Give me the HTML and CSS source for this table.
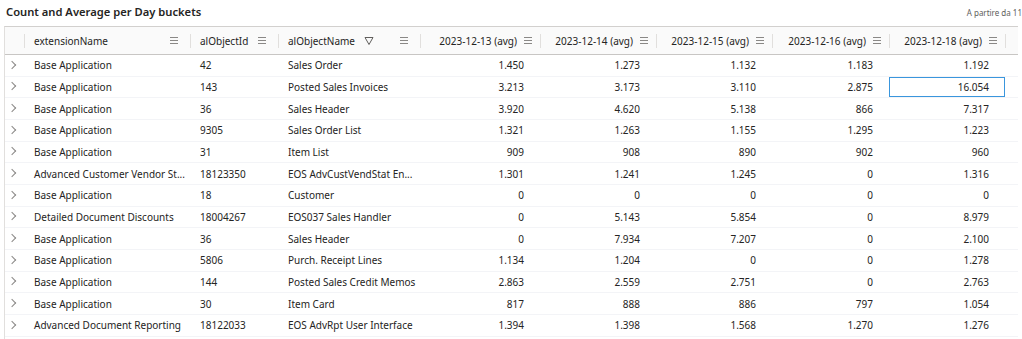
FILE: index.html
```html
<!DOCTYPE html>
<html lang="it">
<head>
    <meta charset="UTF-8">
    <title>Count and Average per Day buckets</title>
    <link rel="stylesheet" href="styles.css">
</head>
<body>
    <div class="visual">
        <div class="visual-top">
            <span class="visual-title">Count and Average per Day buckets</span>
            <span class="visual-note">A partire da 11</span>
        </div>

        <div class="matrix">
            <!-- header -->
            <div class="row head">
                <div class="cell"></div>
                <div class="cell"><span class="sep"></span><span class="label">extensionName</span><span class="menu"></span></div>
                <div class="cell"><span class="sep"></span><span class="label">alObjectId</span><span class="menu"></span></div>
                <div class="cell"><span class="sep"></span><span class="label fixed">alObjectName</span>
                    <svg class="filter" viewBox="0 0 10 10" width="10" height="10"><path d="M1 1.5h8L5 8.5z" fill="none" stroke="#605e5c" stroke-width="1"/></svg>
                    <span class="menu push"></span></div>
                <div class="cell num"><span class="sep"></span><span class="label">2023-12-13 (avg)</span><span class="menu"></span></div>
                <div class="cell num"><span class="sep"></span><span class="label">2023-12-14 (avg)</span><span class="menu"></span></div>
                <div class="cell num"><span class="sep"></span><span class="label">2023-12-15 (avg)</span><span class="menu"></span></div>
                <div class="cell num"><span class="sep"></span><span class="label">2023-12-16 (avg)</span><span class="menu"></span></div>
                <div class="cell num"><span class="sep"></span><span class="label">2023-12-18 (avg)</span><span class="menu"></span></div>
                <div class="cell"><span class="sep"></span></div>
            </div>

            <div class="row"><div class="cell exp"></div><div class="cell">Base Application</div><div class="cell">42</div><div class="cell">Sales Order</div><div class="cell num">1.450</div><div class="cell num">1.273</div><div class="cell num">1.132</div><div class="cell num">1.183</div><div class="cell num">1.192</div><div class="cell"></div></div>
            <div class="row"><div class="cell exp"></div><div class="cell">Base Application</div><div class="cell">143</div><div class="cell">Posted Sales Invoices</div><div class="cell num">3.213</div><div class="cell num">3.173</div><div class="cell num">3.110</div><div class="cell num">2.875</div><div class="cell num selected">16.054</div><div class="cell"></div></div>
            <div class="row"><div class="cell exp"></div><div class="cell">Base Application</div><div class="cell">36</div><div class="cell">Sales Header</div><div class="cell num">3.920</div><div class="cell num">4.620</div><div class="cell num">5.138</div><div class="cell num">866</div><div class="cell num">7.317</div><div class="cell"></div></div>
            <div class="row"><div class="cell exp"></div><div class="cell">Base Application</div><div class="cell">9305</div><div class="cell">Sales Order List</div><div class="cell num">1.321</div><div class="cell num">1.263</div><div class="cell num">1.155</div><div class="cell num">1.295</div><div class="cell num">1.223</div><div class="cell"></div></div>
            <div class="row"><div class="cell exp"></div><div class="cell">Base Application</div><div class="cell">31</div><div class="cell">Item List</div><div class="cell num">909</div><div class="cell num">908</div><div class="cell num">890</div><div class="cell num">902</div><div class="cell num">960</div><div class="cell"></div></div>
            <div class="row"><div class="cell exp"></div><div class="cell">Advanced Customer Vendor St...</div><div class="cell">18123350</div><div class="cell">EOS AdvCustVendStat En...</div><div class="cell num">1.301</div><div class="cell num">1.241</div><div class="cell num">1.245</div><div class="cell num">0</div><div class="cell num">1.316</div><div class="cell"></div></div>
            <div class="row"><div class="cell exp"></div><div class="cell">Base Application</div><div class="cell">18</div><div class="cell">Customer</div><div class="cell num">0</div><div class="cell num">0</div><div class="cell num">0</div><div class="cell num">0</div><div class="cell num">0</div><div class="cell"></div></div>
            <div class="row"><div class="cell exp"></div><div class="cell">Detailed Document Discounts</div><div class="cell">18004267</div><div class="cell">EOS037 Sales Handler</div><div class="cell num">0</div><div class="cell num">5.143</div><div class="cell num">5.854</div><div class="cell num">0</div><div class="cell num">8.979</div><div class="cell"></div></div>
            <div class="row"><div class="cell exp"></div><div class="cell">Base Application</div><div class="cell">36</div><div class="cell">Sales Header</div><div class="cell num">0</div><div class="cell num">7.934</div><div class="cell num">7.207</div><div class="cell num">0</div><div class="cell num">2.100</div><div class="cell"></div></div>
            <div class="row"><div class="cell exp"></div><div class="cell">Base Application</div><div class="cell">5806</div><div class="cell">Purch. Receipt Lines</div><div class="cell num">1.134</div><div class="cell num">1.204</div><div class="cell num">0</div><div class="cell num">0</div><div class="cell num">1.278</div><div class="cell"></div></div>
            <div class="row"><div class="cell exp"></div><div class="cell">Base Application</div><div class="cell">144</div><div class="cell">Posted Sales Credit Memos</div><div class="cell num">2.863</div><div class="cell num">2.559</div><div class="cell num">2.751</div><div class="cell num">0</div><div class="cell num">2.763</div><div class="cell"></div></div>
            <div class="row"><div class="cell exp"></div><div class="cell">Base Application</div><div class="cell">30</div><div class="cell">Item Card</div><div class="cell num">817</div><div class="cell num">888</div><div class="cell num">886</div><div class="cell num">797</div><div class="cell num">1.054</div><div class="cell"></div></div>
            <div class="row"><div class="cell exp"></div><div class="cell">Advanced Document Reporting</div><div class="cell">18122033</div><div class="cell">EOS AdvRpt User Interface</div><div class="cell num">1.394</div><div class="cell num">1.398</div><div class="cell num">1.568</div><div class="cell num">1.270</div><div class="cell num">1.276</div><div class="cell"></div></div>
        </div>
    </div>
</body>
</html>
```

FILE: styles.css
```css
/* --- Base --- */
* {
    margin: 0;
    padding: 0;
    box-sizing: border-box;
}

body {
    font-family: 'Noto Sans', 'Open Sans', sans-serif;
    background-color: #ffffff;
    color: #252423;
    overflow: hidden;
}

/* --- Visual header --- */
.visual {
    width: 1022px;
    height: 339px;
}

.visual-top {
    height: 26px;
    display: flex;
    justify-content: space-between;
    align-items: flex-start;
    padding: 3px 4px 0 6px;
}

.visual-title {
    font-size: 11.2px;
    font-weight: 600;
    color: #252423;
    padding-top: 1px;
}

.visual-note {
    font-size: 8px;
    color: #605e5c;
    padding-top: 4px;
    margin-right: -4px;
}

/* --- Matrix --- */
.matrix {
    margin-left: 4px;
    width: 1014px;
    border-left: 1px solid #e1dfdd;
    border-top: 1px solid #d2d0ce;
    height: 313px;
}

.row {
    display: grid;
    grid-template-columns: 19px 166px 88px 142px 120px 116px 116px 117px 116px 1fr;
    height: 21.66px;
    border-bottom: 1px solid #f3f4f7;
    font-size: 10px;
}

.row.head {
    height: 28px;
    border-bottom: 1px solid #c8c6c4;
    background-color: #fafafa;
    color: #252423;
}

.cell {
    display: flex;
    align-items: center;
    padding: 0 10px;
    white-space: nowrap;
    overflow: hidden;
    position: relative;
}

.cell.num {
    justify-content: flex-end;
    padding-right: 16px;
}

.head .cell {
    padding: 0 12px 0 10px;
}

.head .cell.num { padding-right: 8px; }

.head .label {
    flex: 1;
}

.head .label.fixed,
.head .cell.num .label {
    flex: 0 0 auto;
}

/* column separators in the header */
.head .sep {
    position: absolute;
    left: 0;
    top: 7px;
    height: 14px;
    border-left: 1px solid #e1dfdd;
}

/* hamburger menu icon */
.menu {
    width: 8px;
    height: 7px;
    margin-left: 7px;
    border-top: 1px solid #8a8886;
    border-bottom: 1px solid #8a8886;
    background: linear-gradient(#8a8886, #8a8886) center / 100% 1px no-repeat;
    flex: 0 0 auto;
}

.menu.push {
    margin-left: auto;
}

.filter {
    margin-left: 9px;
    flex: 0 0 auto;
}

/* expand chevron */
.exp {
    padding: 0 0 0 4px;
}

.exp::before {
    content: '';
    width: 5px;
    height: 5px;
    border-top: 1px solid #8a8886;
    border-right: 1px solid #8a8886;
    transform: rotate(45deg);
    margin-bottom: 1px;
}

/* selected cell */
.cell.selected {
    border: 1.5px solid #3a96dd;
    padding-right: 15px;
}
```
